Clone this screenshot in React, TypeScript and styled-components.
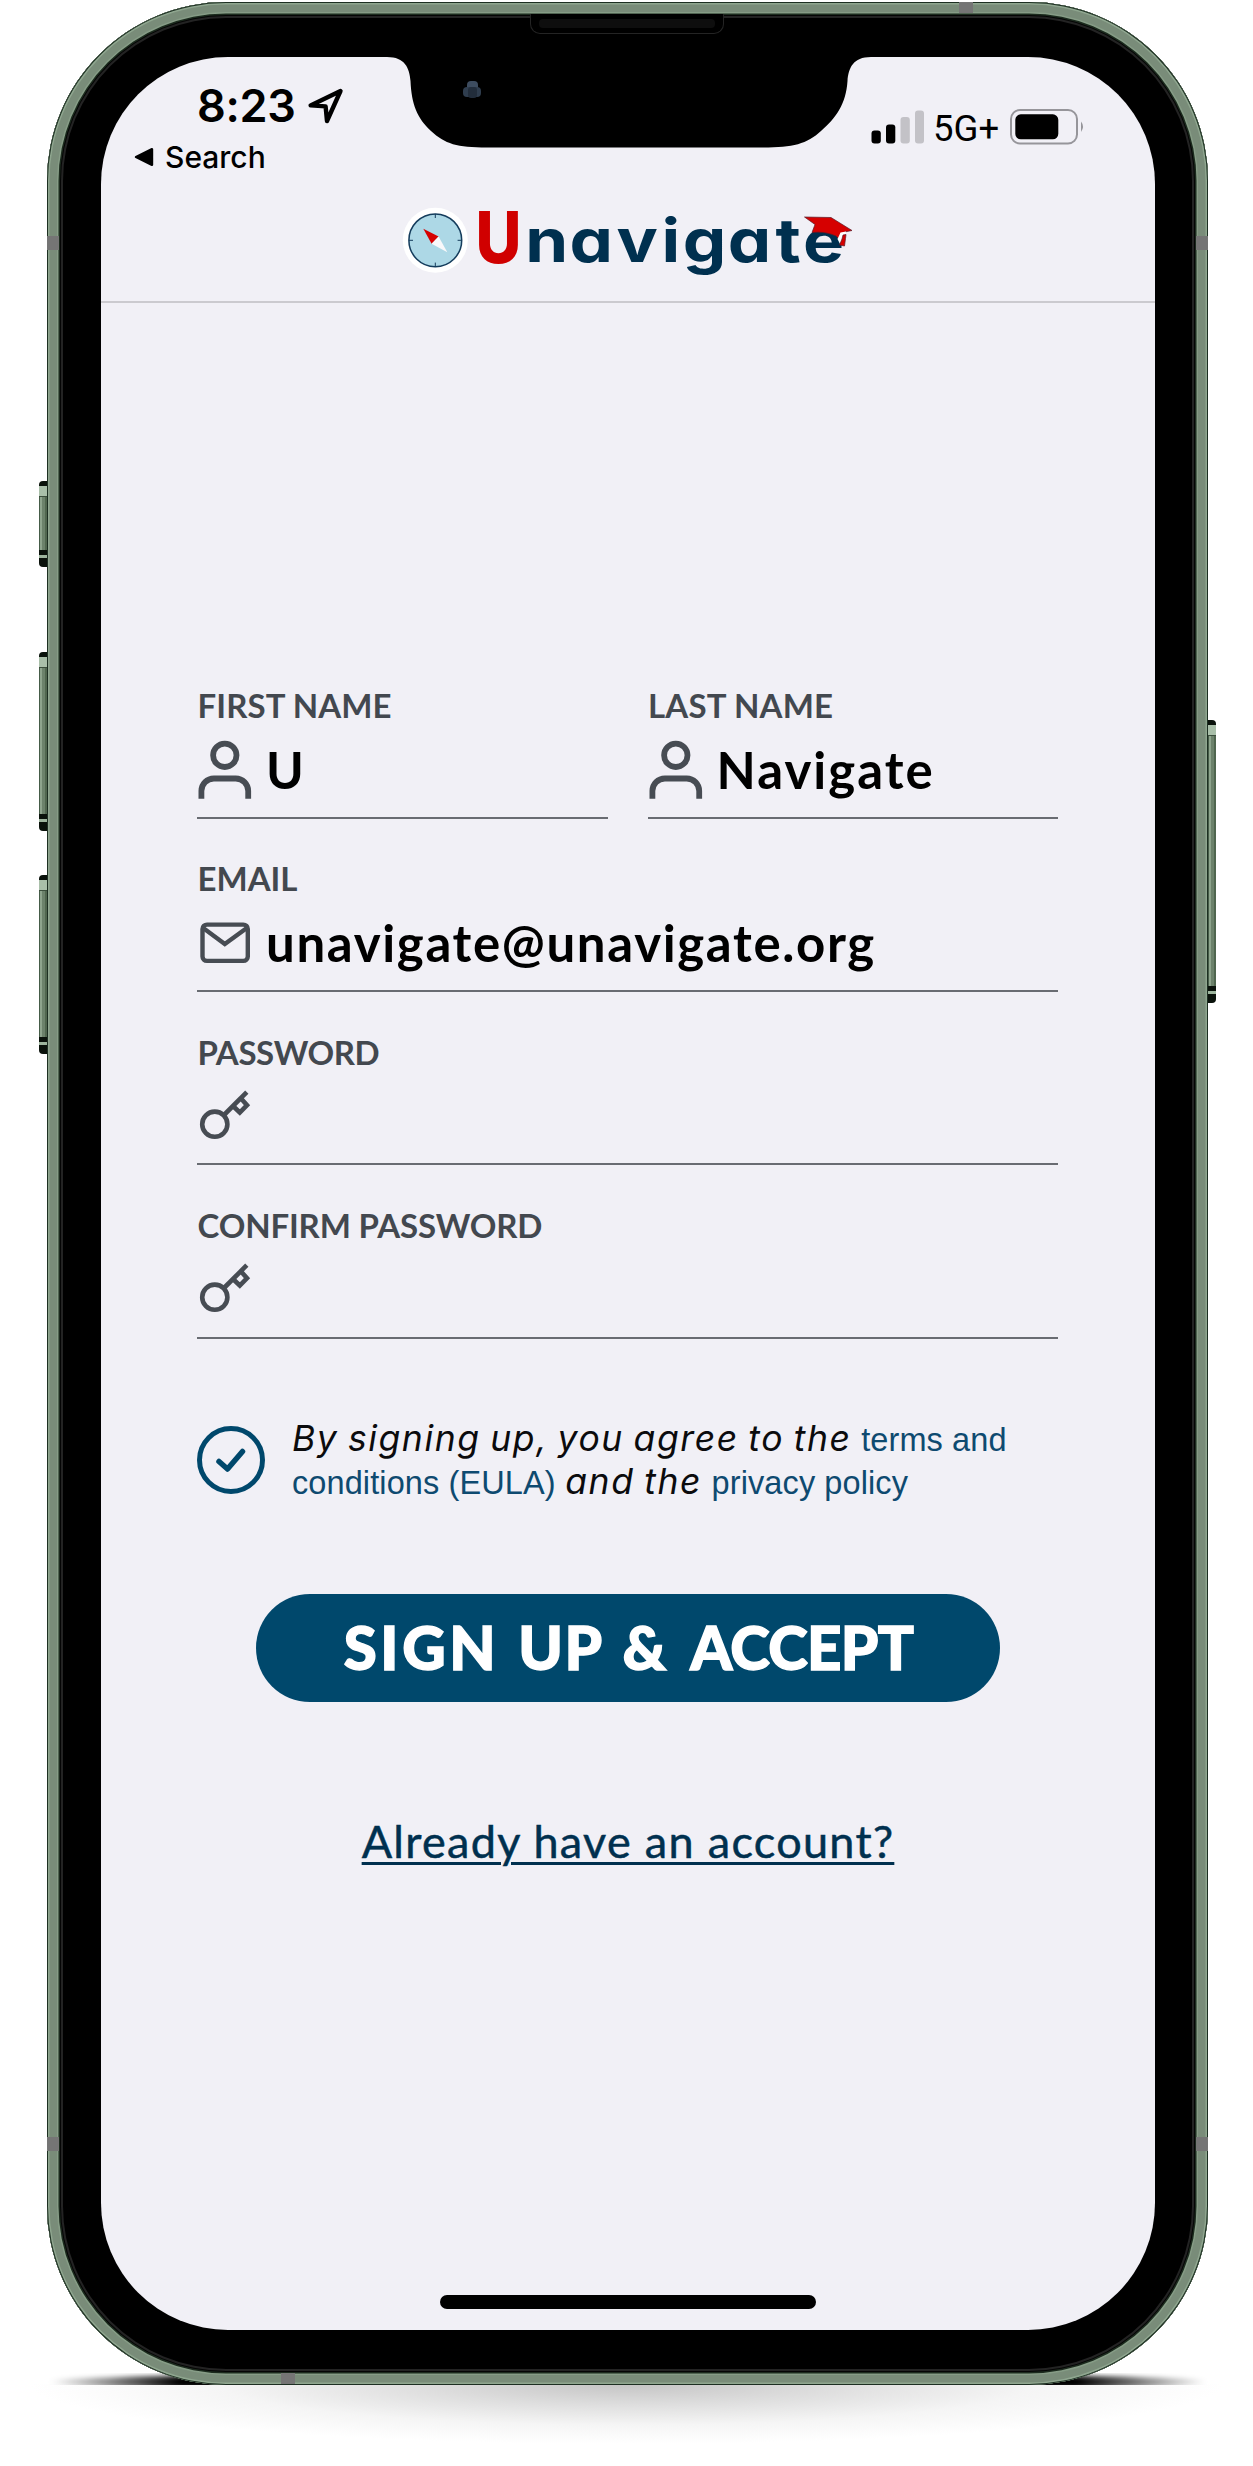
import React from 'react';
import styled, { createGlobalStyle } from 'styled-components';

const GlobalStyle = createGlobalStyle`
  * { box-sizing: border-box; }
  body { margin: 0; background: #fff; }
`;

const LATO = `Lato, "Open Sans", sans-serif`;
const INTER = `Inter, "Noto Sans", sans-serif`;

const Page = styled.main`
  position: relative;
  isolation: isolate;
  width: 1253px;
  height: 2466px;
  padding: 2px 0 0 47px;
  overflow: hidden;
  background: #fff;
`;

/* ---------- device ---------- */

const Phone = styled.div`
  position: relative;
  display: flex;
  width: 1161px;
  height: 2383px;
  padding: 55px 53px 55px 54px;
  border-radius: 179px;
  background: #000;
  box-shadow:
    inset 0 0 0 1px #1d2f22,
    inset 0 0 0 2.5px #8fa68f,
    inset 0 0 0 10px #798c79,
    inset 0 0 0 11.5px #869c86,
    inset 0 0 0 13px #1b2a1d,
    inset 0 0 0 14px #050505,
    inset 0 0 0 16px #232323;
`;

const ContactShadow = styled.div`
  position: absolute;
  z-index: -1;
  left: 38px;
  top: 2373px;
  width: 1180px;
  height: 12px;
  overflow: hidden;

  &::before {
    content: '';
    display: block;
    height: 18px;
    border-radius: 50% / 60%;
    background: linear-gradient(90deg, transparent 1%, #000 12%, #000 88%, transparent 99%);
    filter: blur(2.5px);
  }
`;

const FloorShadow = styled.div`
  position: absolute;
  z-index: -1;
  left: 30px;
  top: 2384px;
  width: 1193px;
  height: 60px;
  background: radial-gradient(ellipse 50% 100% at 50% 0, #c4c4c4 0%, #dedede 35%, #f5f5f5 68%, #fff 100%);
`;

const SideButton = styled.div<{ $side: 'left' | 'right'; $top: number; $height: number }>`
  position: absolute;
  ${(p) => (p.$side === 'left' ? 'left: -8px;' : 'right: -8px;')}
  top: ${(p) => p.$top}px;
  width: 8px;
  height: ${(p) => p.$height}px;
  border-radius: ${(p) => (p.$side === 'left' ? '4px 0 0 4px' : '0 4px 4px 0')};
  background:
    linear-gradient(#0a120b 0 5px, transparent 5px calc(100% - 17px), #0a120b calc(100% - 17px) calc(100% - 12px), #9db59d calc(100% - 12px) calc(100% - 9px), #0a120b calc(100% - 9px)),
    linear-gradient(transparent 5px, #a9bfa9 5px 15px, #3a4d3b 15px 16px, transparent 16px),
    linear-gradient(90deg, #455c47 0 1px, #8ea48d 1px 3px, #6c826b 3px 6px, #50664f 6px);
`;

const Antenna = styled.i<{ $x: number; $y: number; $w: number; $h: number }>`
  position: absolute;
  left: ${(p) => p.$x}px;
  top: ${(p) => p.$y}px;
  width: ${(p) => p.$w}px;
  height: ${(p) => p.$h}px;
  background: #757575;
`;

const Speaker = styled.div`
  position: absolute;
  top: 12px;
  left: 483px;
  width: 194px;
  height: 20px;
  padding: 5px 8px;
  border: 1px solid #242424;
  border-top: 0;
  border-radius: 0 0 10px 10px;
  background: #000;

  &::before {
    content: '';
    display: block;
    height: 9px;
    border-radius: 4px;
    background: #0e0e0e;
  }
`;

const Notch = styled.svg`
  position: absolute;
  left: 286px;
  top: -1px;
  width: 484px;
  height: 94px;
`;

const Screen = styled.div`
  position: relative;
  display: flex;
  flex-direction: column;
  width: 1054px;
  height: 2273px;
  border-radius: 127px;
  background: #f1f0f6;
`;

/* ---------- header ---------- */

const StatusBar = styled.div`
  display: flex;
  justify-content: space-between;
  align-items: flex-start;
  height: 133px;
  padding: 26px 70px 0 33px;
  color: #000;
`;

const StatusLeft = styled.div`
  display: flex;
  flex-direction: column;
  gap: 10px;
`;

const Clock = styled.div`
  display: flex;
  align-items: center;
  gap: 11px;
  padding-left: 63px;
  font: 600 45px/46px ${INTER};
  letter-spacing: -0.3px;
`;

const BackLink = styled.a`
  display: flex;
  align-items: center;
  gap: 11px;
  font: 450 30px/36px ${INTER};
  letter-spacing: 0;
`;

const StatusRight = styled.div`
  display: flex;
  align-items: center;
  height: 36px;
  margin-top: 26px;
`;

const Network = styled.span`
  width: 86px;
  padding: 3px 0 0 9px;
  font: 450 36.5px/36px Roboto, sans-serif;
`;

const Header = styled.header`
  display: flex;
  justify-content: center;
  height: 113px;
  padding-left: 4px;
  border-bottom: 2px solid #cbcacf;
`;

/* ---------- form ---------- */

const Form = styled.form`
  display: flex;
  flex-direction: column;
  padding: 381px 97px 0 96px;
`;

const Fields = styled.div`
  display: flex;
  flex-direction: column;
  gap: 38.9px;
`;

const FieldPair = styled.div`
  display: grid;
  grid-template-columns: 1fr 1fr;
  gap: 40px;
`;

const Field = styled.label`
  display: flex;
  flex-direction: column;
  height: 134.5px;
  border-bottom: 2px solid #696c72;
`;

const FieldLabel = styled.span<{ $spacing?: number }>`
  padding-left: 0.5px;
  font: 700 33px/42px ${LATO};
  letter-spacing: ${(p) => p.$spacing ?? 0}px;
  color: #43484f;
`;

const FieldBody = styled.span`
  display: flex;
  align-items: center;
  height: 86px;
`;

const FieldIcon = styled.svg`
  flex: none;
  width: 54px;
  height: 60px;
  margin: 2px 14px 0 1px;
  fill: none;
  stroke: #474c53;
`;

const FieldValue = styled.span<{ $spacing: number }>`
  margin-top: 2px;
  font: 700 51px/60px ${LATO};
  letter-spacing: ${(p) => p.$spacing}px;
  color: #000;
`;

const Agreement = styled.div`
  display: flex;
  gap: 27px;
  margin-top: 78px;
  white-space: nowrap;
`;

const AgreementText = styled.p`
  margin: 0;
  font: italic 450 35.5px/43.5px ${INTER};
  font-feature-settings: 'cv11';
  letter-spacing: 1.6px;
  word-spacing: -2px;
  color: #0b0b0d;
`;

const TermsLink = styled.a`
  font: normal 400 32.5px/1 "Liberation Sans", Arial, sans-serif;
  letter-spacing: 0.1px;
  word-spacing: 0;
  color: #0e4a70;
`;

const CheckIcon = styled.svg`
  flex: none;
  width: 68px;
  height: 68px;
  margin-top: 9px;
  fill: none;
  stroke: #00486c;
`;

const SubmitButton = styled.button`
  display: flex;
  align-self: center;
  align-items: center;
  justify-content: center;
  gap: 19px;
  width: 744px;
  height: 108px;
  margin-top: 90px;
  padding: 0 0 2px 2px;
  border: 0;
  border-radius: 54px;
  background: #00486c;
  color: #fff;
  font: 900 60px/1 ${LATO};
  -webkit-text-stroke: 1.4px #fff;
`;

const ButtonWord = styled.span<{ $spacing: number; $after?: number }>`
  margin-right: ${(p) => p.$after ?? 0}px;
  letter-spacing: ${(p) => p.$spacing}px;
`;

const LoginLink = styled.a`
  align-self: center;
  margin: 111px 0 0 1px;
  font: 400 45px/56px ${LATO};
  letter-spacing: 1.3px;
  color: #00304f;
  -webkit-text-stroke: 0.5px #00304f;
  text-decoration: underline;
  text-decoration-thickness: 2.5px;
  text-underline-offset: 4px;
`;

const HomeIndicator = styled.div`
  align-self: center;
  width: 376px;
  height: 14px;
  margin: auto 0 21px;
  border-radius: 7px;
  background: #000;
`;

/* ---------- drawings ---------- */

const LocationArrow = () => (
  <svg width="38" height="38" viewBox="0 0 38 38" fill="none" stroke="#000" strokeWidth="4.4" strokeLinejoin="round">
    <path d="M33.500 4 L3.600 18.400 L18.600 19.400 L20 34 Z" />
  </svg>
);

const BackTriangle = () => (
  <svg width="20" height="20" viewBox="0 0 20 20">
    <path d="M2 10 L18 2.2 V17.8 Z" stroke="#000" strokeWidth="2.4" strokeLinejoin="round" />
  </svg>
);

const SignalBars = () => (
  <svg width="53" height="34" viewBox="0 0 53 34">
    <rect x="0.5" y="20.5" width="9.3" height="13" rx="3" />
    <rect x="15" y="14.5" width="9.3" height="19" rx="3" />
    <rect x="29.5" y="7" width="9.3" height="26.5" rx="3" fill="#c3c2c7" />
    <rect x="44" y="0.5" width="9" height="33" rx="3" fill="#c3c2c7" />
  </svg>
);

const Battery = () => (
  <svg width="75" height="36" viewBox="0 0 75 36">
    <rect x="1" y="1" width="66" height="33.5" rx="9" fill="none" stroke="#96959a" strokeWidth="2" />
    <rect x="5.3" y="5.3" width="43" height="25" rx="5.5" />
    <path d="M71 12.5 q4 5 0 10.5 Z" fill="#96959a" />
  </svg>
);

const LogoName = styled.text`
  font-feature-settings: 'cv11';
`;

const Logo = () => (
  <svg width="500" height="111" viewBox="0 0 500 111" fontFamily='Inter, "Noto Sans", sans-serif'>
    <circle cx="55.3" cy="50.3" r="32.5" fill="#fff" />
    <circle cx="55.3" cy="50.3" r="26.4" fill="#add8e6" stroke="#143c5c" strokeWidth="1.5" />
    <path d="M55.3 24 v4 M55.3 72.6 v4 M29 50.3 h4 M77.6 50.3 h4" stroke="#143c5c" strokeWidth="1" />
    <path d="M43.3 38.7 L58.6 46.6 L51.6 53.8 Z" fill="#d60000" />
    <path d="M67.3 62.3 L58.6 46.6 L51.6 53.8 Z" fill="#f8f8fa" />
    <text transform="translate(95.5 73) scale(.89 1)" fontSize="71" fontWeight="800" fill="#d00000">
      U
    </text>
    <LogoName
      transform="translate(1.500 72) scale(1.15 1)"
      x="125 163.4 204.3 243.5 262 301 342.600 366.500"
      fontSize="60"
      fontWeight="730"
      fill="#00304f"
    >
      navigate
    </LogoName>
    <path d="M424.5 27 L451 27.5 L472 40.5 L464.5 42 L462 52 L456 46 Q445 41 432 42.5 L435 34.5 Z" fill="#d60000" stroke="#5a1a26" strokeWidth=".7" />
    <path d="M460.5 42.5 L466 41.5 L465 48 L460 54 L457.5 49 Z" fill="#fff" />
    <path d="M463 45 l3-.5 -.5 4 -1 7.5 -5 -1 2.5-6 Z" fill="#d60000" stroke="#5a1a26" strokeWidth=".7" />
  </svg>
);

const UserIcon = () => (
  <FieldIcon viewBox="0 0 54 60" strokeWidth="5.8">
    <circle cx="26.8" cy="15.3" r="11.7" />
    <path d="M3.4 58.7 V51 a12.5 12.5 0 0 1 12.5 -12.5 h21.8 a12.5 12.5 0 0 1 12.5 12.5 V58.7" />
  </FieldIcon>
);

const MailIcon = () => (
  <FieldIcon viewBox="0 0 54 60" strokeWidth="4.4">
    <rect x="4.5" y="11.6" width="45.3" height="36.3" rx="4.5" />
    <path d="M5.2 15 L26.8 31 L48.8 15" />
  </FieldIcon>
);

const KeyIcon = () => (
  <FieldIcon viewBox="0 0 54 60" strokeWidth="4.6">
    <circle cx="16.8" cy="37.2" r="12.6" />
    <path d="M26 28 L48.800 5.200" />
    <path d="M35.5 19.500 L41.8 25.500 L49 18.2 L43.500 12" />
  </FieldIcon>
);

export default function App() {
  return (
    <>
      <GlobalStyle />
      <Page>
        <FloorShadow />
        <ContactShadow />
        <Phone>
          <SideButton $side="left" $top={479} $height={86} />
          <SideButton $side="left" $top={650} $height={179} />
          <SideButton $side="left" $top={873} $height={179} />
          <SideButton $side="right" $top={718} $height={283} />
          <Antenna $x={0} $y={234} $w={12} $h={14} />
          <Antenna $x={1149} $y={234} $w={12} $h={14} />
          <Antenna $x={0} $y={2135} $w={12} $h={14} />
          <Antenna $x={1149} $y={2135} $w={12} $h={14} />
          <Antenna $x={912} $y={0} $w={14} $h={11} />
          <Antenna $x={234} $y={2371} $w={14} $h={11} />
          <Speaker />
          <Screen>
            <Notch viewBox="0 0 484 94">
              <path d="M0 0 V1 C18 1 22.500 12 23.500 25 C24.500 48 30 62 44 75 C58 88 70 91.500 100 91.500 H376 C406 91.500 420 88 434 75 C449 62 459 48 460.500 25 C461.500 12 466 1 484 1 V0 Z" />
              <rect x="80" y="25" width="11" height="10" rx="4" fill="#3d4c5f" />
              <rect x="76" y="31" width="18" height="10" rx="4" fill="#2f3d4e" />
              <rect x="81" y="31" width="9" height="11" rx="3" fill="#222d3b" />
            </Notch>
            <StatusBar>
              <StatusLeft>
                <Clock>
                  8:23
                  <LocationArrow />
                </Clock>
                <BackLink>
                  <BackTriangle />
                  Search
                </BackLink>
              </StatusLeft>
              <StatusRight>
                <SignalBars />
                <Network>5G+</Network>
                <Battery />
              </StatusRight>
            </StatusBar>
            <Header>
              <Logo />
            </Header>
            <Form>
              <Fields>
                <FieldPair>
                  <Field>
                    <FieldLabel $spacing={0.1}>FIRST NAME</FieldLabel>
                    <FieldBody>
                      <UserIcon />
                      <FieldValue $spacing={0}>U</FieldValue>
                    </FieldBody>
                  </Field>
                  <Field>
                    <FieldLabel $spacing={0.2}>LAST NAME</FieldLabel>
                    <FieldBody>
                      <UserIcon />
                      <FieldValue $spacing={2}>Navigate</FieldValue>
                    </FieldBody>
                  </Field>
                </FieldPair>
                <Field>
                  <FieldLabel>EMAIL</FieldLabel>
                  <FieldBody>
                    <MailIcon />
                    <FieldValue $spacing={1.63}>unavigate@unavigate.org</FieldValue>
                  </FieldBody>
                </Field>
                <Field>
                  <FieldLabel $spacing={-0.4}>PASSWORD</FieldLabel>
                  <FieldBody>
                    <KeyIcon />
                  </FieldBody>
                </Field>
                <Field>
                  <FieldLabel $spacing={-0.15}>CONFIRM PASSWORD</FieldLabel>
                  <FieldBody>
                    <KeyIcon />
                  </FieldBody>
                </Field>
              </Fields>
              <Agreement>
                <CheckIcon viewBox="0 0 68 68">
                  <circle cx="34" cy="34" r="31.5" strokeWidth="5" />
                  <path d="M22 35.500 L30.500 43 L45.500 25.500" strokeWidth="5.500" strokeLinecap="round" strokeLinejoin="round" />
                </CheckIcon>
                <AgreementText>
                  By signing up, you agree to the <TermsLink>terms and</TermsLink>
                  <br />
                  <TermsLink>conditions (EULA)</TermsLink> and the <TermsLink>privacy policy</TermsLink>
                </AgreementText>
              </Agreement>
              <SubmitButton type="button">
                <ButtonWord $spacing={3.6}>SIGN</ButtonWord>
                <ButtonWord $spacing={1.5}>UP</ButtonWord>
                <ButtonWord $spacing={0} $after={5}>&amp;</ButtonWord>
                <ButtonWord $spacing={-0.7}>ACCEPT</ButtonWord>
              </SubmitButton>
              <LoginLink>Already have an account?</LoginLink>
            </Form>
            <HomeIndicator />
          </Screen>
        </Phone>
      </Page>
    </>
  );
}
